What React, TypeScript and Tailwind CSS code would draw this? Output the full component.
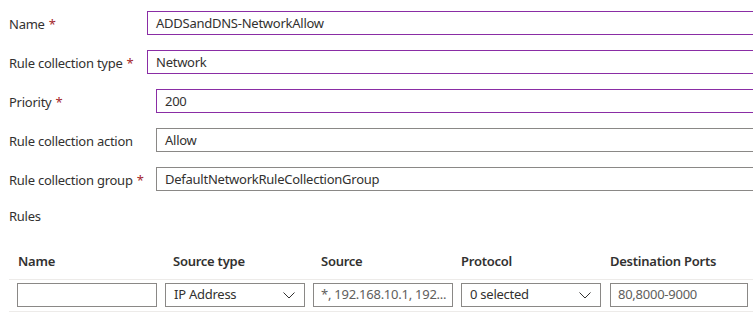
import React from "react"

const font = { fontFamily: '"Segoe UI", "Noto Sans", sans-serif' }

function Req() {
  return <span className="ml-1 text-[#a4262c]">*</span>
}

function Chevron() {
  return (
    <svg width="12" height="7" viewBox="0 0 12 7" className="text-[#323130]">
      <path d="M0.5 0.5 L6 6 L11.5 0.5" fill="none" stroke="currentColor" strokeWidth="1" />
    </svg>
  )
}

const fields = [
  { label: "Name", req: true, value: "ADDSandDNS-NetworkAllow", ml: "ml-[147px]", dirty: true },
  { label: "Rule collection type", req: true, value: "Network", ml: "ml-[147px]", dirty: true },
  { label: "Priority", req: true, value: "200", ml: "ml-[156px]", dirty: true },
  { label: "Rule collection action", req: false, value: "Allow", ml: "ml-[156px]", dirty: false },
  { label: "Rule collection group", req: true, value: "DefaultNetworkRuleCollectionGroup", ml: "ml-[156px]", dirty: false },
]

export default function App() {
  return (
    <div
      className="w-[753px] h-[327px] overflow-hidden bg-white text-[13px] leading-[19.5px] tracking-[-0.25px] text-[#323130]"
      style={font}
    >
      <div className="flex flex-col gap-[15px] pt-[11px]">
        {fields.map((f) => (
          <div key={f.label} className="relative flex h-[24px] items-center">
            <div className="absolute left-[9px] top-[4px] whitespace-nowrap">
              {f.label}
              {f.req && <Req />}
            </div>
            <div
              className={`${f.ml} flex h-[24px] w-[700px] shrink-0 items-center border px-2 pt-[1px] ${
                f.dirty ? "border-[#8a2da5]" : "border-[#8a8886]"
              }`}
            >
              {f.value}
            </div>
          </div>
        ))}
      </div>

      <div className="ml-[9px] mt-[16px]">Rules</div>

      <div className="ml-[9px] mt-[22px]">
        <div className="flex h-[31px] items-start border-b border-[#edebe9] pt-[3px] font-semibold">
          <div className="w-[156px] pl-[9px]">Name</div>
          <div className="w-[148px] pl-[8px]">Source type</div>
          <div className="w-[148px] pl-[8px]">Source</div>
          <div className="w-[149px]">Protocol</div>
          <div>Destination Ports</div>
        </div>
        <div className="flex h-[32px] items-center gap-[8px] border-b border-[#edebe9] pl-[8px]">
          <div className="h-[24px] w-[140px] border border-[#8a8886]" />
          <div className="flex h-[24px] w-[140px] items-center justify-between border border-[#8a8886] pl-[8px] pr-[9px]">
            <span>IP Address</span>
            <Chevron />
          </div>
          <div className="flex h-[24px] w-[140px] items-center overflow-hidden whitespace-nowrap border border-[#8a8886] px-[7px] text-[#605e5c]">
            *, 192.168.10.1, 192...
          </div>
          <div className="flex h-[24px] w-[140px] items-center justify-between border border-[#8a8886] pl-[8px] pr-[9px]">
            <span>0 selected</span>
            <Chevron />
          </div>
          <div className="ml-[1px] flex h-[24px] w-[138px] items-center border border-[#8a8886] px-[7px] text-[#605e5c]">
            80,8000-9000
          </div>
        </div>
      </div>
    </div>
  )
}
